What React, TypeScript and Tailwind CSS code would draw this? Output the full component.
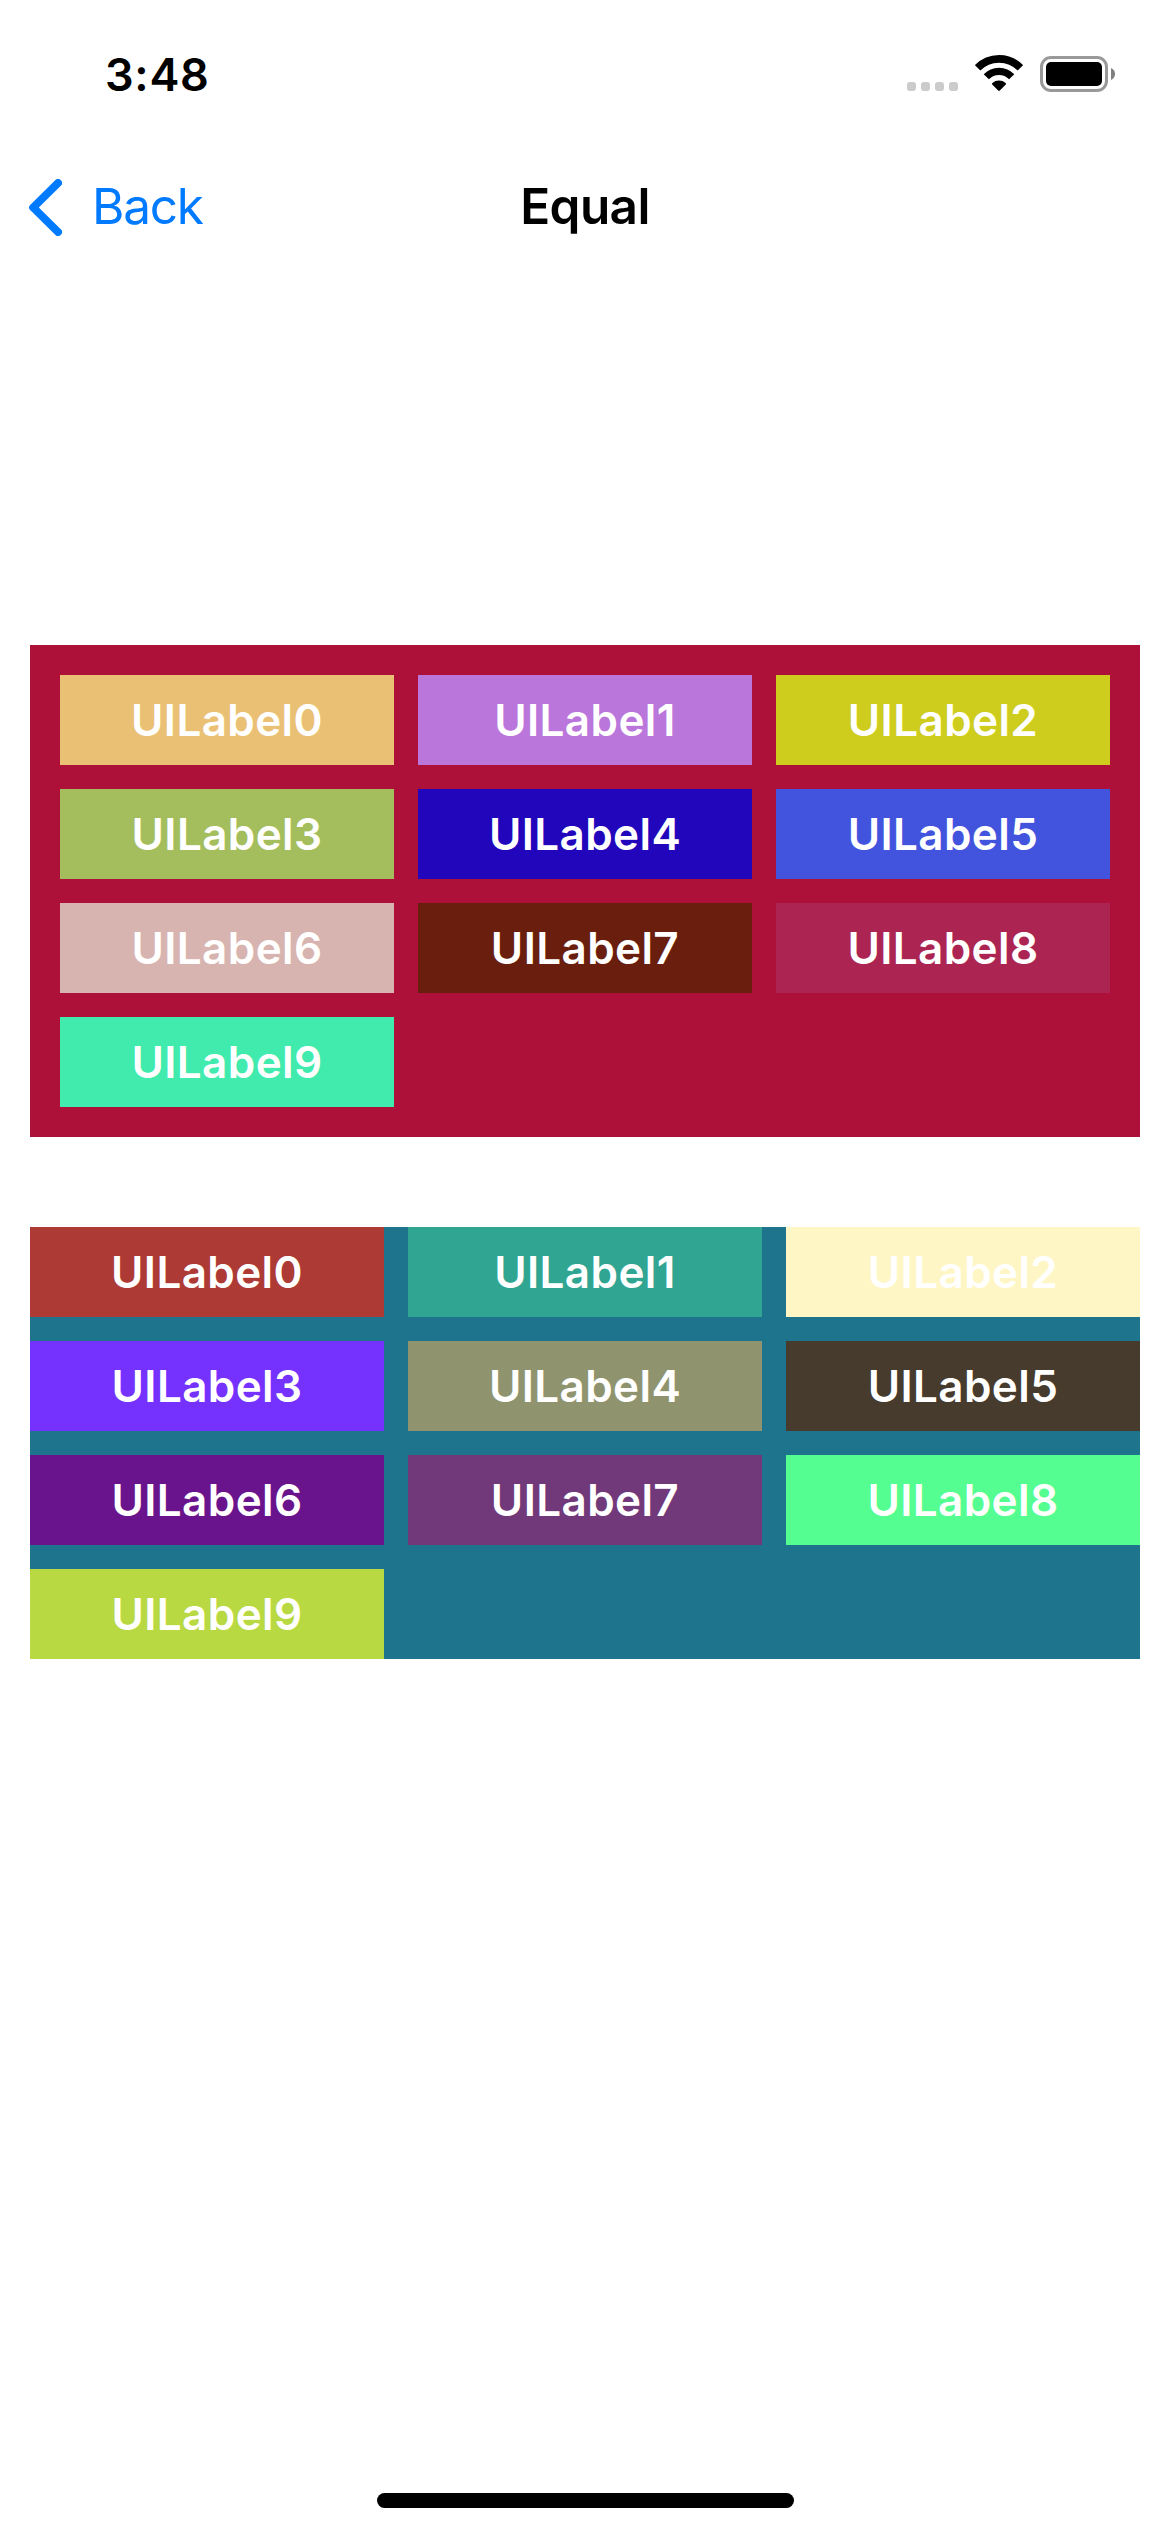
const spaced = [
  "bg-[#EAC174]",
  "bg-[#BA76DB]",
  "bg-[#CECC1D]",
  "bg-[#A5BE5D]",
  "bg-[#2106BC]",
  "bg-[#4254DE]",
  "bg-[#D7B4AF]",
  "bg-[#6A1E0E]",
  "bg-[#AC2552]",
  "bg-[#41EBAE]",
];

const flush = [
  "bg-[#AD3A35]",
  "bg-[#30A592]",
  "bg-[#FFF6C5]",
  "bg-[#7532FF]",
  "bg-[#8F946F]",
  "bg-[#463B2D]",
  "bg-[#69148D]",
  "bg-[#72397A]",
  "bg-[#55FE91]",
  "bg-[#B9D943]",
];

function LabelGrid({ colors, className }: { colors: string[]; className: string }) {
  return (
    <section className={`grid grid-cols-3 gap-6 ${className}`}>
      {colors.map((color, i) => (
        <div
          key={color}
          className={`flex h-[90px] items-center justify-center text-[44px] leading-none font-semibold tracking-[0.4px] text-white ${color}`}
        >
          UILabel{i}
        </div>
      ))}
    </section>
  );
}

function StatusBar() {
  return (
    <header className="flex h-[141px] items-start justify-between pt-[55px] pr-[55px] pl-[105px]">
      <span className="-mt-[3px] text-[45px] leading-[45px] font-semibold tracking-[0.7px]">3:48</span>
      <div className="flex h-[37px] items-start">
        <div className="mt-[27px] mr-[17px] flex gap-[5px]">
          {[0, 1, 2, 3].map((i) => (
            <span key={i} className="size-[9px] rounded-[3px] bg-[#CBCBCB]" />
          ))}
        </div>
        <svg width="48" height="37" viewBox="0 0 48 37" fill="none" className="mr-[17px]">
          <path d="M2.6 12.9A29.9 29.9 0 0 1 45.4 12.9" stroke="#000" strokeWidth="7.6" />
          <path d="M11.3 21.8A17.6 17.6 0 0 1 36.7 21.8" stroke="#000" strokeWidth="7.2" />
          <path d="M23.2 35.6L17.2 29.6Q16.6 28.8 17.4 28.1A10 10 0 0 1 30.6 28.1Q31.4 28.8 30.8 29.6L24.8 35.6Q24 36.4 23.2 35.6Z" fill="#000" />
        </svg>
        <div className="mt-px flex items-center gap-[3px]">
          <div className="flex h-9 w-[68px] rounded-[11px] border-3 border-[#999999] p-[3px]">
            <div className="flex-1 rounded-[5px] bg-black" />
          </div>
          <svg width="4" height="12" viewBox="0 0 4 12">
            <path d="M0 0C5.4 2.2 5.4 9.8 0 12Z" fill="#808080" />
          </svg>
        </div>
      </div>
    </header>
  );
}

export default function App() {
  return (
    <div className="flex h-[2532px] w-[1170px] flex-col bg-white font-['Inter',sans-serif] text-black">
      <StatusBar />
      <nav className="grid h-[132px] grid-cols-[1fr_auto_1fr] items-center text-[49.5px] leading-none">
        <button className="flex items-center pl-[29px] text-[#007AFF]">
          <svg width="33" height="57" viewBox="0 0 33 57" fill="none" className="mr-[30px]">
            <path
              d="M29 4L4.2 28.5L29 53"
              stroke="currentColor"
              strokeWidth="8"
              strokeLinecap="round"
              strokeLinejoin="round"
            />
          </svg>
          <span className="tracking-[-1.2px]">Back</span>
        </button>
        <h1 className="font-semibold tracking-[-0.6px]">Equal</h1>
      </nav>
      <main className="mt-[372px] flex flex-col gap-[90px] px-[30px]">
        <LabelGrid colors={spaced} className="bg-[#AD1139] p-[30px]" />
        <LabelGrid colors={flush} className="bg-[#1E748D]" />
      </main>
      <footer className="mt-auto flex justify-center pb-6">
        <div className="ml-px h-[15px] w-[417px] rounded-full bg-black" />
      </footer>
    </div>
  );
}
